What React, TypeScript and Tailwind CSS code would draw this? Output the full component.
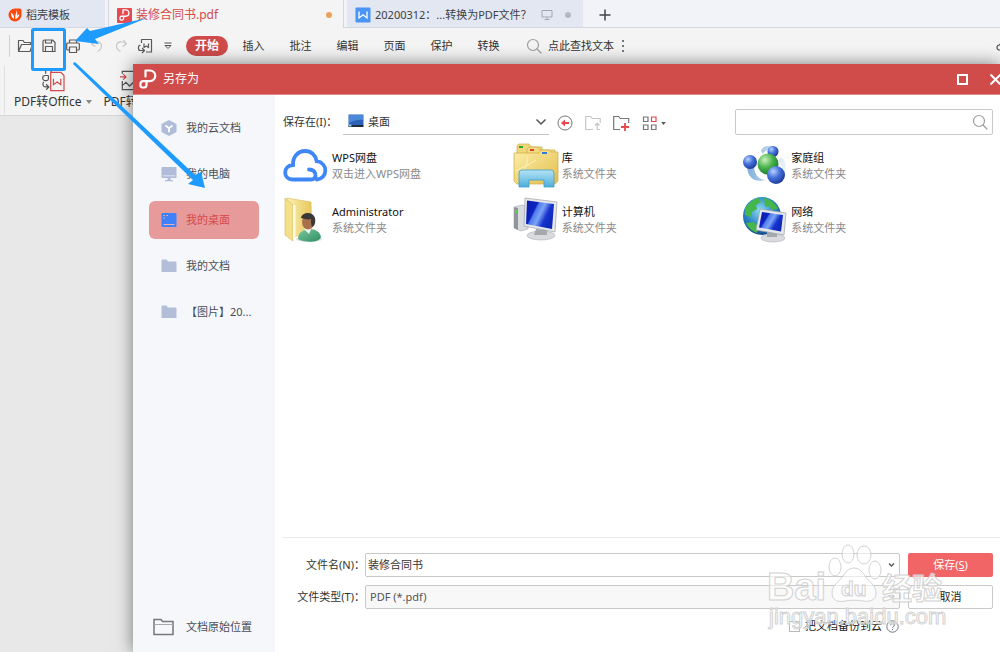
import { useState } from "react";
import type { ReactNode } from "react";

const LogoP = ({ className }: { className: string }) => (
  <svg viewBox="0 0 18 20" className={className} fill="none" stroke="#fff" strokeWidth="2.200" strokeLinecap="round" strokeLinejoin="round">
    <path d="M6.500 7.500V1.500H11a5.300 5.300 0 0 1 0 10.600H4a2.600 2.600 0 0 0-2.500 3M7.500 12.500v3.500a2.500 2.500 0 0 1-2.500 2.500H3.500a2 2 0 0 1-2-2.500" />
  </svg>
);

const SearchIcon = ({ className }: { className: string }) => (
  <svg viewBox="0 0 16 16" className={className} fill="none" stroke="#9b9da1" strokeWidth="1.200" strokeLinecap="round">
    <circle cx="7" cy="7" r="5.500" />
    <path d="m11 11 4 4" />
  </svg>
);

const FlameIcon = () => (
  <svg viewBox="0 0 14 14" className="size-[14px]">
    <path d="M7 .5h4.500a2 2 0 0 1 2 2V7A6.500 6.500 0 1 1 7 .5Z" fill="#fb4a0c" />
    <path d="M8.300 1.800c1 2.300-.6 3.600-1 5.700-.2 1.200 0 2.600.3 3.400 2.300-.5 3.700-2.600 3.600-4.600-.8.300-1.600.9-2 1.900C9.300 6 9.700 3.600 8.300 1.800ZM3 4.800c.1 3.200 1 5.200 3 6.100.5-2.600-.6-4.900-3-6.100Z" fill="#fff" />
  </svg>
);

const WordIcon = () => (
  <svg viewBox="0 0 16 16" className="size-4">
    <rect x=".5" y=".5" width="15" height="15" rx="1" fill="#4a94f5" />
    <path d="M4 4.500V11l4-3.200 4 3.200V4.500" fill="none" stroke="#fff" strokeWidth="1.300" />
  </svg>
);

const quick: { label: string; color: string; art: ReactNode }[] = [
  { label: "打开", color: "#5a5a5a", art: <path d="M1.500 13.500v-11h4.500l1.300 2h6.200v2M1.500 13.500l3-7h11l-2.500 7Z" /> },
  { label: "保存", color: "#5a5a5a", art: <path d="M2 13.500v-10a1.500 1.500 0 0 1 1.500-1.500h8l2.500 2.500v9ZM4.500 2v3h6V2M4.500 13.500V8.500h7v5" /> },
  { label: "打印", color: "#5a5a5a", art: <path d="M4.500 5V2h7v3M4.500 12H2.700a1 1 0 0 1-1-1V6a1 1 0 0 1 1-1h10.600a1 1 0 0 1 1 1v5a1 1 0 0 1-1 1h-1.800M4.500 9h7v5.500h-7Z" /> },
  { label: "撤销", color: "#c6c6c6", art: <path d="M5.500 2 2.500 6l4 2.500M2.500 6.200C6 2.500 12.500 3 12.500 8c0 3-2 4.500-4 5.500" /> },
  { label: "恢复", color: "#c6c6c6", art: <path d="m10.500 2 3 4-4 2.500M13.500 6.200C10 2.500 3.500 3 3.500 8c0 3 2 4.500 4 5.500" /> },
  { label: "导出", color: "#5a5a5a", art: <path d="M4.500 5V1.500h10V14H9M7 5.500v4L9.300 8l2.200 1.500v-4M3.500 7.500a1.500 1.500 0 0 0-2 1.500v1.500a2 2 0 0 0 2 2H7M5 10l2.500 2.500L5 15" /> },
];

const menus = ["插入", "批注", "编辑", "页面", "保护", "转换"];

const folderSolid = (
  <svg viewBox="0 0 16 16" className="size-4">
    <path d="M.5 2.500A1 1 0 0 1 1.500 1.500h4l1.500 2h7.500a1 1 0 0 1 1 1v9.500H.5Z" fill="#b3bfd8" />
  </svg>
);

const places: { label: string; icon: ReactNode }[] = [
  {
    label: "我的云文档",
    icon: (
      <svg viewBox="0 0 16 16" className="size-4">
        <path d="m8 0 7.500 4v8L8 16 .5 12V4Z" fill="#b0bcd8" />
        <path d="m4.500 5.500 3.500 2.700 3.500-2.700M8 8.200v4" fill="none" stroke="#fff" strokeWidth="1.800" />
      </svg>
    ),
  },
  {
    label: "我的电脑",
    icon: (
      <svg viewBox="0 0 16 16" className="size-4">
        <path d="M.5 1h15v11H9.500v2H12v1.200H4V14h2.500v-2h-6Z" fill="#b0bcd8" />
        <path d="M2 9.800h12" stroke="#dfe5f2" />
      </svg>
    ),
  },
  {
    label: "我的桌面",
    icon: (
      <svg viewBox="0 0 16 16" className="size-4">
        <rect x=".5" y="1" width="15" height="14" rx="1" fill="#3f81f8" />
        <path d="M2.500 12.500h11M2.500 3.500H4M5.500 3.500H7M2.500 6H4" stroke="#f3b0b4" strokeWidth="1.200" />
      </svg>
    ),
  },
  { label: "我的文档", icon: folderSolid },
  { label: "【图片】20...", icon: folderSolid },
];

const CloudArt = () => (
  <svg viewBox="0 0 46 46" className="size-[46px]" fill="none" stroke="#3f86f6" strokeWidth="3.800" strokeLinecap="round">
    <path d="M28 36.500H9.500C5 36.500 2.200 33.500 2.200 29.500c0-4 3-7.300 7.800-7.500C9.500 14 15 8 22 8c6 0 10.500 4 11.700 10.200C39 19 42.300 23 42.300 27.500c0 5-3.500 8.500-8.500 9M28 36.500c3 0 5-2.500 4.500-5-.5-3-3-5-6.500-5" />
  </svg>
);

const UserFolderArt = () => (
  <svg viewBox="0 0 46 46" className="size-[46px]">
    <defs>
      <linearGradient id="uf1" x1="0" x2="1">
        <stop offset="0" stopColor="#fbf0b2" />
        <stop offset="1" stopColor="#e6c659" />
      </linearGradient>
      <linearGradient id="uf2" x1="0" x2="1" y1="0" y2="1">
        <stop offset="0" stopColor="#7cc9a0" />
        <stop offset="1" stopColor="#2d8d62" />
      </linearGradient>
    </defs>
    <ellipse cx="26" cy="42" rx="13" ry="3" fill="#ccc" opacity=".6" />
    <path d="M4 1 28 5l1 31-20 4Z" fill="url(#uf1)" stroke="#d9bd5c" strokeWidth=".6" />
    <path d="M2 1 10 8v36L2 38Z" fill="#f4df8a" stroke="#d5b654" strokeWidth=".6" />
    <path d="M10 8v36l2.500-5V8Z" fill="#fffbe2" />
    <path d="M15 42c0-6 4-9 11-10 7 0 11 3 12 8-2 6-17 6-23 2Z" fill="url(#uf2)" />
    <path d="m21 32 3-2h5l-3 7Z" fill="#f3f5f4" />
    <ellipse cx="25" cy="25" rx="6" ry="7.500" fill="#a8714b" />
    <path d="M18 21c1-6 12-7 14 0 1 5-1 9-3 9-1-3-1-5-1-8-3 1-6 0-10-1Z" fill="#3a3937" />
  </svg>
);

const LibraryArt = () => (
  <svg viewBox="0 0 46 46" className="size-[46px]">
    <defs>
      <linearGradient id="lb1" x1="0" x2="1" y1="0" y2="1">
        <stop offset="0" stopColor="#fcefaa" />
        <stop offset="1" stopColor="#e3bd4c" />
      </linearGradient>
      <linearGradient id="lb2" x1="0" x2="0" y1="0" y2="1">
        <stop offset="0" stopColor="#b5e3f6" />
        <stop offset="1" stopColor="#4eaeda" />
      </linearGradient>
    </defs>
    <g stroke="#cfa944" strokeWidth=".7">
      <path d="M4 10V2.500L6 1h10l2 3h11v12H4Z" fill="#f0d77a" />
      <path d="M14 10V6l2-2h9l2 3h15v12H14Z" fill="#f3da7e" />
      <path d="M1 10h25V9l2-2h8l2 2h7v29l-3 3H4l-3-3Z" fill="url(#lb1)" />
    </g>
    <path d="M6 3h4v2H6Z" fill="#2fa33a" />
    <path d="M17 6h4v2h-4Z" fill="#d9412d" />
    <path d="M29 9h5v2h-5Z" fill="#2c7cd6" />
    <path d="m2 28 11-5-7 14M13 23l2-9M13 23l10-6" fill="none" stroke="#fff7cc" opacity=".7" />
    <path d="M6 44V30q0-3 3-3h29q3 0 3 3v14H31v-7H16v7Z" fill="url(#lb2)" stroke="#3f9fcd" strokeWidth=".8" />
  </svg>
);

const screenDefs = (id: string) => (
  <defs>
    <linearGradient id={id} x1="0" x2="1" y1="0" y2=".5">
      <stop offset="0" stopColor="#0b1fa8" />
      <stop offset=".36" stopColor="#0d22c0" />
      <stop offset=".42" stopColor="#4f7cec" />
      <stop offset=".6" stopColor="#7ba4f6" />
      <stop offset=".8" stopColor="#1633cf" />
      <stop offset="1" stopColor="#1029b8" />
    </linearGradient>
  </defs>
);

const ComputerArt = () => (
  <svg viewBox="0 0 46 46" className="size-[46px]">
    {screenDefs("pc1")}
    <path d="m1 10 8-2 6 1v23l-7 2-7-3Z" fill="#d9dcdf" stroke="#a9adb2" strokeWidth=".6" />
    <path d="m1 10 4 1v22l-4-2Z" fill="#8f959b" />
    <path d="M2 13h2v3H2Z" fill="#53d84a" />
    <ellipse cx="28" cy="38.500" rx="14" ry="4.500" fill="#d8dadd" stroke="#b1b4b8" strokeWidth=".6" />
    <path d="m23 32 11 1v5H21Z" fill="#a5a9ae" />
    <path d="m12 1 32 4-2 30-31-6Z" fill="#e6e8ea" stroke="#9ea3a8" strokeWidth=".7" />
    <path d="m14 3.500 27 3.500-2 25-26-5Z" fill="url(#pc1)" />
  </svg>
);

const HomegroupArt = () => (
  <svg viewBox="0 0 46 46" className="size-[46px]">
    <defs>
      <radialGradient id="hg1" cx=".35" cy=".3" r=".8">
        <stop offset="0" stopColor="#b8d2ff" />
        <stop offset=".45" stopColor="#4572da" />
        <stop offset="1" stopColor="#15308f" />
      </radialGradient>
      <radialGradient id="hg2" cx=".35" cy=".3" r=".8">
        <stop offset="0" stopColor="#c9f2bb" />
        <stop offset=".5" stopColor="#44af48" />
        <stop offset="1" stopColor="#187528" />
      </radialGradient>
      <linearGradient id="hg3" x1="0" x2="1">
        <stop offset="0" stopColor="#7faedb" />
        <stop offset="1" stopColor="#eef5fb" />
      </linearGradient>
    </defs>
    <path d="M5 24c1 11 8 16 18 13-7-1-10-5-11-13ZM19 8C20 3 28 1 35 5c-6 0-11 1-14 6ZM39 14c7 5 6 14 2 19 0-8-1-12-5-15Z" fill="url(#hg3)" />
    <circle cx="31" cy="8.500" r="5.500" fill="url(#hg1)" />
    <circle cx="26" cy="21" r="10.500" fill="url(#hg2)" />
    <circle cx="8" cy="19" r="7" fill="url(#hg1)" />
    <circle cx="34" cy="32" r="9" fill="url(#hg1)" />
  </svg>
);

const NetworkArt = () => (
  <svg viewBox="0 0 46 46" className="size-[46px]">
    {screenDefs("nw2")}
    <defs>
      <radialGradient id="nw1" cx=".45" cy=".35" r=".7">
        <stop offset="0" stopColor="#8fdcf5" />
        <stop offset=".55" stopColor="#2a86c8" />
        <stop offset="1" stopColor="#14417e" />
      </radialGradient>
    </defs>
    <circle cx="20" cy="19" r="19" fill="url(#nw1)" />
    <path d="M3 12c3-6 8-10 14-11l2 4-5 3 1 4-5 3-1 5-6-2ZM22 1c6 1 12 5 14 11l-6 1-3-4-4 1ZM4 26l8-1 5 5-2 6C10 34 6 31 4 26ZM24 13l6 2-2 4-5-1Z" fill="#45b649" />
    <ellipse cx="31" cy="41" rx="12" ry="4" fill="#d8dadd" stroke="#aeb1b5" strokeWidth=".6" />
    <path d="M25 35h10v5h-10Z" fill="#a5a9ae" />
    <path d="m18 12 26 4-2 22-28-5Z" fill="#e4e7ea" stroke="#9aa0a7" strokeWidth=".7" />
    <path d="m20 15 21 3-2 16.500-22-4Z" fill="url(#nw2)" />
  </svg>
);

const files: { name: string; note: string; art: ReactNode }[] = [
  { name: "WPS网盘", note: "双击进入WPS网盘", art: <CloudArt /> },
  { name: "库", note: "系统文件夹", art: <LibraryArt /> },
  { name: "家庭组", note: "系统文件夹", art: <HomegroupArt /> },
  { name: "Administrator", note: "系统文件夹", art: <UserFolderArt /> },
  { name: "计算机", note: "系统文件夹", art: <ComputerArt /> },
  { name: "网络", note: "系统文件夹", art: <NetworkArt /> },
];

function TabBar() {
  return (
    <nav aria-label="文档标签" className="flex h-7 bg-[#f2f3f8] text-[#3c3f45]">
      <button className="flex w-[105px] shrink-0 items-center gap-1 border-b border-[#d3d8e3] bg-[#e2e7f1] pt-0.5 pl-2">
        <FlameIcon />
        稻壳模板
      </button>
      <div className="w-[3px] shrink-0 border-b border-[#d3d8e3]" />
      <button className="flex w-[236px] shrink-0 items-center gap-1 border-x border-[#d3d8e3] bg-[#f4f4f4] pt-0.5 pr-[11px] pl-2 text-[#d5494b]">
        <span className="flex size-[15px] items-center justify-center rounded-[1px] bg-[#e34b50]">
          <LogoP className="h-3 w-[11px]" />
        </span>
        <span className="text-xs">装修合同书.pdf</span>
        <span className="ml-auto size-[6px] rounded-full bg-[#eba35c]" />
      </button>
      <div className="w-[3px] shrink-0 border-b border-[#d3d8e3]" />
      <button className="flex w-[236px] shrink-0 items-center gap-1 border-b border-[#d3d8e3] bg-[#e2e7f1] pt-0.5 pr-3 pl-2 whitespace-nowrap">
        <WordIcon />
        20200312：...转换为PDF文件？
        <svg viewBox="0 0 12 12" className="ml-auto size-3" fill="none" stroke="#a3a7b0">
          <path d="M1 1.500h10v6.500H1ZM6 8v2.500M3.500 10.500h5" />
        </svg>
        <span className="ml-2 size-[6px] rounded-full bg-[#b4b8c1]" />
      </button>
      <div className="flex grow items-center border-b border-[#d3d8e3] pt-0.5 pl-4">
        <button aria-label="新建标签">
          <svg viewBox="0 0 12 12" className="size-3" stroke="#444" strokeWidth="1.500">
            <path d="M6 .5v11M.5 6h11" />
          </svg>
        </button>
      </div>
    </nav>
  );
}

function Toolbar() {
  return (
    <div className="flex h-9 items-center bg-[#f4f4f4] text-[#333]">
      <div className="ml-[9px] h-[22px] w-px shrink-0 bg-[#d0d0d0]" />
      <div className="ml-[7px] flex shrink-0 gap-2">
        {quick.map((q) => (
          <button key={q.label} aria-label={q.label}>
            <svg viewBox="0 0 16 16" className="size-4" fill="none" stroke={q.color} strokeWidth="1.200" strokeLinejoin="round">
              {q.art}
            </svg>
          </button>
        ))}
      </div>
      <button aria-label="更多" className="ml-[11px]">
        <svg viewBox="0 0 8 8" className="size-2" fill="none" stroke="#555">
          <path d="M.5 1h7M1 3.500h6L4 6.500Z" />
        </svg>
      </button>
      <button className="ml-[14px] h-5 w-[42px] shrink-0 rounded-full bg-[#cf4b4b] text-xs font-bold text-white">开始</button>
      <div className="flex shrink-0">
        {menus.map((m) => (
          <button key={m} className="w-[47px] pl-1 text-center">
            {m}
          </button>
        ))}
      </div>
      <button className="ml-4 flex shrink-0 items-center gap-1.5">
        <SearchIcon className="size-4" />
        点此查找文本
      </button>
      <button aria-label="选项" className="ml-2 flex flex-col gap-[3px]">
        <span className="size-0.5 bg-[#777]" />
        <span className="size-0.5 bg-[#777]" />
        <span className="size-0.5 bg-[#777]" />
      </button>
      <button aria-label="云同步" className="-mr-[9px] ml-auto">
        <svg viewBox="0 0 13 10" className="h-[10px] w-[13px]" fill="none" stroke="#555" strokeWidth="1.200">
          <path d="M3.500 9a2.500 2.500 0 0 1 0-5 3.500 3.500 0 0 1 6.500 0 2.500 2.500 0 0 1 0 5Z" />
        </svg>
      </button>
    </div>
  );
}

function Ribbon() {
  return (
    <div className="flex h-[52px] items-center border-b border-[#d6d6d6] bg-[#f4f4f4] pl-1 text-[#333]">
      <div className="h-12 w-px bg-[#e0e0e0]" />
      <button className="ml-[9px] flex flex-col items-center gap-0.5">
        <svg viewBox="0 0 26 24" className="h-[22px] w-6" fill="none" strokeWidth="1.300">
          <path d="M5 0v4M11 0v3M8 6H4.500a2.500 2.500 0 0 0 0 5.500H6a2 2 0 0 0 2-2V6M3 13c-2 2-1 5.500 2 5.500h3M5.500 15.500l3 3-3 3" stroke="#555" />
          <path d="M10.500 2.500h11l3.500 3.500v16.500H10.500ZM13.500 9.500v6.500l4-3 4 3V9.500" stroke="#cf4b4b" />
        </svg>
        <span className="flex items-center gap-1 leading-4">
          <span className="text-xs leading-4">PDF转Office</span>
          <svg viewBox="0 0 6 4" className="h-1 w-1.5" fill="#888">
            <path d="M0 0h6L3 4Z" />
          </svg>
        </span>
      </button>
      <button className="ml-3 flex flex-col items-start gap-0.5">
        <svg viewBox="0 0 26 24" className="ml-[15px] h-[22px] w-6" fill="none" stroke="#555" strokeWidth="1.300">
          <path d="M3.500 4V1.500h21v20h-21V12M3.500 17l4-3.500 4 4 6-6 7 6M18 6h3" />
          <path d="M1 7.500h6M4.500 4.500l3 3-3 3" stroke="#cf4b4b" />
        </svg>
        <span className="text-xs leading-4">PDF转图片</span>
      </button>
    </div>
  );
}

function Sidebar() {
  const [active, setActive] = useState("我的桌面");
  return (
    <aside className="flex w-[142px] shrink-0 flex-col bg-[#f5f7fb] pt-[14px] pb-[9px] pl-4 text-[#4a4e57]">
      <div className="flex flex-col gap-2">
        {places.map((p) => (
          <button
            key={p.label}
            onClick={() => setActive(p.label)}
            className={
              p.label === active
                ? "flex h-[38px] w-[110px] items-center gap-[9px] rounded-md bg-[#e79a9a] pl-3 text-[#d5494b]"
                : "flex h-[38px] w-[110px] items-center gap-[9px] rounded-md pl-3 whitespace-nowrap"
            }
          >
            {p.icon}
            {p.label}
          </button>
        ))}
      </div>
      <button className="mt-auto flex h-8 items-center gap-3 pl-1">
        <svg viewBox="0 0 21 18" className="h-[18px] w-[21px]" fill="none" stroke="#777" strokeWidth="1.500">
          <path d="M1 16.500v-15h7l1.500 2H20v13Z" />
          <path d="M1 6.500h19" stroke="#aaa" strokeWidth="1" />
        </svg>
        文档原始位置
      </button>
    </aside>
  );
}

function LocationRow() {
  return (
    <div className="flex items-center pt-[14px] pr-[7px] pl-2">
      <label htmlFor="place" className="w-[60px] shrink-0 text-[#333]">
        保存在(I)：
      </label>
      <div className="relative h-[26px] w-[206px] shrink-0 border-b border-[#c4c4c4]">
        <select id="place" className="h-full w-full appearance-none bg-transparent pl-[25px] text-[#333] outline-none">
          <option>桌面</option>
        </select>
        <svg viewBox="0 0 16 14" className="pointer-events-none absolute top-[5px] left-[5px] h-[14px] w-4">
          <path d="M.5.500h15v11H.5Z" fill="#2a62b8" />
          <path d="M1 1h14v5Q8 5 1 9Z" fill="#4a88d8" />
          <path d="M.5 11h15v2H.5Z" fill="#222c3a" />
          <path d="M1 10.500h2.500v2H1Z" fill="#7fd0f0" />
        </svg>
        <svg viewBox="0 0 12 8" className="pointer-events-none absolute top-[9px] right-0.5 h-2 w-3" fill="none" stroke="#555" strokeWidth="1.500">
          <path d="m1.500 1.500 4.500 4.500 4.500-4.500" />
        </svg>
      </div>
      <div className="ml-2 flex shrink-0 items-center gap-3 pt-0.5">
        <button aria-label="后退">
          <svg viewBox="0 0 16 16" className="size-4" fill="none" stroke="#777">
            <circle cx="8" cy="8" r="7" />
            <path d="M5.500 8H12" stroke="#e8474b" strokeWidth="2" />
            <path d="M4 8l4-3.500v7Z" fill="#e8474b" stroke="none" />
          </svg>
        </button>
        <button aria-label="上一级">
          <svg viewBox="0 0 16 16" className="size-4" fill="none" stroke="#c6c6c6" strokeWidth="1.200">
            <path d="M8 14.500H.7v-13h5l1.500 2h8V8M10 10.500l2.200-2.300 2.300 2.300M12.200 8.500v6H15" />
          </svg>
        </button>
        <button aria-label="新建文件夹">
          <svg viewBox="0 0 17 16" className="h-4 w-[17px]" fill="none" stroke="#777" strokeWidth="1.200">
            <path d="M7 14.500H.7v-13h5l1.500 2h8.500V8" />
            <path d="M12 8v8M8 12h8" stroke="#e8474b" strokeWidth="1.800" />
          </svg>
        </button>
        <button aria-label="视图" className="flex items-center gap-[3px]">
          <svg viewBox="0 0 16 16" className="size-4" fill="none" stroke="#777" strokeWidth="1.200">
            <path d="M1.500 2h4.500v4.500h-4.500ZM1.500 10h4.500v4.500h-4.500ZM9.500 10h4.500v4.500h-4.500Z" />
            <path d="M9.500 2h4.500v4.500h-4.500Z" stroke="#e8474b" />
          </svg>
          <svg viewBox="0 0 6 4" className="h-[3px] w-[5px]" fill="#555">
            <path d="M0 0h6L3 4Z" />
          </svg>
        </button>
      </div>
      <div className="ml-auto flex h-[26px] w-[258px] items-center rounded-[2px] border border-[#c9c9c9] bg-white pr-1">
        <input aria-label="搜索" className="min-w-0 grow bg-transparent px-2 outline-none" />
        <SearchIcon className="size-4" />
      </div>
    </div>
  );
}

function SaveForm() {
  const [name, setName] = useState("装修合同书");
  return (
    <form className="ml-2 flex flex-col border-t border-[#e9e9e9] pt-[15px] pr-[7px] pb-[17px] text-[#333]" onSubmit={(e) => e.preventDefault()}>
      <div className="flex gap-2">
        <div className="flex grow flex-col gap-2">
          <div className="flex h-6 items-center">
            <label htmlFor="fname" className="w-[82px] shrink-0 text-right">文件名(N)：</label>
            <div className="flex h-full grow items-center rounded-[2px] border border-[#c9c9c9] bg-white pr-1">
              <input id="fname" value={name} onChange={(e) => setName(e.target.value)} className="min-w-0 grow bg-transparent pl-0.5 outline-none" />
              <button type="button" aria-label="历史文件名">
                <svg viewBox="0 0 7 6" className="h-1.5 w-[7px]" fill="none" stroke="#555" strokeWidth="1.300">
                  <path d="m1 1.500 2.500 2.500 2.500-2.500" />
                </svg>
              </button>
            </div>
          </div>
          <div className="flex h-6 items-center">
            <label htmlFor="ftype" className="w-[82px] shrink-0 text-right">文件类型(T)：</label>
            <div className="flex h-full grow items-center rounded-[2px] border border-[#c9c9c9] bg-[#f8f8f8] pr-1">
              <select id="ftype" className="min-w-0 grow appearance-none bg-transparent pl-1 text-[#555] outline-none">
                <option>PDF (*.pdf)</option>
              </select>
              <svg viewBox="0 0 7 6" className="h-1.5 w-[7px]" fill="none" stroke="#999" strokeWidth="1.300">
                <path d="m1 1.500 2.500 2.500 2.500-2.500" />
              </svg>
            </div>
          </div>
        </div>
        <div className="flex w-[85px] shrink-0 flex-col gap-2">
          <button type="submit" className="h-6 rounded-[2px] bg-[#f26566] text-white">
            保存(<u>S</u>)
          </button>
          <button type="button" className="h-6 rounded-[2px] border border-[#c9c9c9] bg-white text-[#222]">
            取消
          </button>
        </div>
      </div>
      <div className="mt-2 mr-[94px] flex h-[18px] items-center justify-end gap-1">
        <input id="backup" type="checkbox" className="size-[11px] appearance-none border border-[#b9b9b9] bg-white checked:bg-[#f26566]" />
        <label htmlFor="backup" className="ml-px text-[#222]">把文档备份到云</label>
        <svg viewBox="0 0 13 13" className="size-[13px]" fill="none" stroke="#6f7682">
          <circle cx="6.500" cy="6.500" r="5.700" />
          <path d="M4.700 5.300a1.800 1.800 0 1 1 2.500 1.600q-.7.300-.7 1.100M6.500 9v1" />
        </svg>
      </div>
    </form>
  );
}

function SaveDialog() {
  return (
    <section role="dialog" aria-label="另存为" className="absolute top-16 right-0 bottom-0 left-[133px] flex flex-col bg-white shadow-[0_0_16px_rgba(0,0,0,0.500)]">
      <header className="flex h-[31px] shrink-0 items-center overflow-hidden border-b border-[#e08a8a] bg-[#d04c4b] pl-1.5 text-white">
        <LogoP className="h-5 w-[18px]" />
        <h1 className="ml-1.5 text-xs">另存为</h1>
        <button aria-label="最大化" className="ml-auto">
          <svg viewBox="0 0 11 11" className="size-[11px]" fill="none" stroke="#fff" strokeWidth="2">
            <path d="M1 1h9v9H1Z" />
          </svg>
        </button>
        <button aria-label="关闭" className="-mr-px ml-[22px]">
          <svg viewBox="0 0 11 11" className="size-[11px]" stroke="#fff" strokeWidth="2">
            <path d="m.5.500 10 10M10.500.500l-10 10" />
          </svg>
        </button>
      </header>
      <div className="flex min-h-0 grow">
        <Sidebar />
        <main className="flex min-w-0 grow flex-col">
          <LocationRow />
          <ul className="mt-2 grid grid-cols-3 gap-y-2 pr-7 pl-2">
            {files.map((f) => (
              <li key={f.name} className="flex h-[46px] items-center gap-[3px]">
                {f.art}
                <div className="whitespace-nowrap">
                  <p className="text-[#111]">{f.name}</p>
                  <p className="text-[#8a8a8a]">{f.note}</p>
                </div>
              </li>
            ))}
          </ul>
          <div className="grow" />
          <SaveForm />
        </main>
      </div>
    </section>
  );
}

function Watermark() {
  return (
    <svg viewBox="0 0 190 92" className="pointer-events-none absolute right-[46px] bottom-5 h-[92px] w-[190px]" fill="#fff" fillOpacity=".6" stroke="#d2d2d2" strokeWidth="1">
      <ellipse cx="71" cy="27" rx="6" ry="9" />
      <ellipse cx="84" cy="14" rx="6" ry="9" />
      <ellipse cx="100" cy="15" rx="7" ry="9" />
      <ellipse cx="111" cy="30" rx="6" ry="9" />
      <path d="M90 28c-6 0-9 5-11 8-4 6-11 9-11 17 0 9 8 9 13 8 6-1 12-1 18 0 6 1 13 0 13-8 0-8-7-11-11-17-2-3-5-8-11-8Z" />
      <g fontFamily="'Liberation Sans', 'Noto Sans CJK SC', sans-serif" fontWeight="700">
        <text x="3" y="60" fontSize="38">Bai</text>
        <text x="77" y="56" fontSize="21">du</text>
        <text x="118" y="59" fontSize="30">经验</text>
      </g>
      <text x="5" y="84" fontSize="22" fontFamily="'Liberation Sans', sans-serif">jingyan.baidu.com</text>
    </svg>
  );
}

function Annotations() {
  return (
    <svg viewBox="0 0 220 200" className="pointer-events-none absolute top-0 left-0 h-[200px] w-[220px]" fill="#1e9bff">
      <rect x="32.500" y="29.500" width="32" height="40" rx="1" fill="none" stroke="#1e9bff" strokeWidth="3" />
      <path d="M147 18 90 31 87 28 75 41l24 3-4-5Z" />
      <path d="m74 62 2 1 119 112 6-3 4 16-17-4 5-4L73 64Z" />
    </svg>
  );
}

export default function App() {
  return (
    <div className="relative flex min-h-screen flex-col overflow-hidden bg-[#e8e8e8] font-['Noto_Sans','Noto_Sans_CJK_SC',sans-serif] text-[11px] leading-4">
      <TabBar />
      <Toolbar />
      <Ribbon />
      <SaveDialog />
      <Watermark />
      <Annotations />
    </div>
  );
}
